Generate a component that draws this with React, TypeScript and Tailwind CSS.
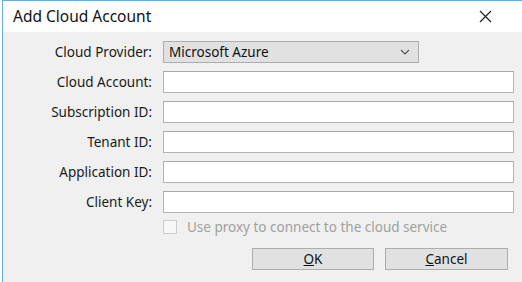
import React from 'react';

const fieldLabels = ['Cloud Account:', 'Subscription ID:', 'Tenant ID:', 'Application ID:', 'Client Key:'];

const Label: React.FC<{ text: string }> = ({ text }) => (
  <div className="flex items-center justify-end h-[22px] text-[13.5px] text-[#1a1a1a]">{text}</div>
);

const App: React.FC = () => {
  return (
    <div
      className="w-[522px] h-[282px] bg-white pl-[2px] overflow-hidden"
      style={{ fontFamily: '"Noto Sans", "Open Sans", Arial, sans-serif' }}
    >
      <div className="flex flex-col h-full border-l border-t border-[#6aaee8]">
        {/* title bar */}
        <div className="flex items-center justify-between h-[31px] bg-white pl-[10px] pr-[30px]">
          <span className="text-[15.5px] text-[#111]">Add Cloud Account</span>
          <svg width="13" height="13" viewBox="0 0 13 13" className="mt-[-1px]">
            <path d="M1 1 L12 12 M12 1 L1 12" stroke="#222" strokeWidth="1.2" fill="none" />
          </svg>
        </div>

        {/* body */}
        <div className="flex-1 bg-[#f0f0f0] pt-[9px] pr-[8px]">
          <div className="grid grid-cols-[149px_1fr] gap-x-[11px] gap-y-[8px]">
            <Label text="Cloud Provider:" />
            <div className="flex items-center justify-between w-[256px] h-[22px] bg-[#e1e1e1] border border-[#adadad] pl-[5px] pr-[8px] text-[13.5px] text-[#111]">
              <span>Microsoft Azure</span>
              <svg width="10" height="6" viewBox="0 0 10 6">
                <path d="M1 1 L5 5 L9 1" stroke="#555" strokeWidth="1.2" fill="none" />
              </svg>
            </div>

            {fieldLabels.map((label) => (
              <React.Fragment key={label}>
                <Label text={label} />
                <div className="h-[22px] bg-white border border-[#b4b4b4] border-t-[#a8a8a8]" />
              </React.Fragment>
            ))}

            <div />
            <div className="flex items-center h-[14px] mt-[-1px]">
              <div className="w-[14px] h-[14px] border border-[#cccccc] bg-[#f7f7f7]" />
              <span className="ml-[10px] text-[13.5px] text-[#a0a0a0]">Use proxy to connect to the cloud service</span>
            </div>
          </div>

          <div className="flex justify-end gap-[11px] mt-[14px] pr-[6px]">
            <button className="w-[122px] h-[22px] bg-[#e1e1e1] border border-[#adadad] text-[13.5px] text-[#111]">
              <span className="underline">O</span>K
            </button>
            <button className="w-[123px] h-[22px] bg-[#e1e1e1] border border-[#adadad] text-[13.5px] text-[#111]">
              <span className="underline">C</span>ancel
            </button>
          </div>
        </div>
      </div>
    </div>
  );
};

export default App;
